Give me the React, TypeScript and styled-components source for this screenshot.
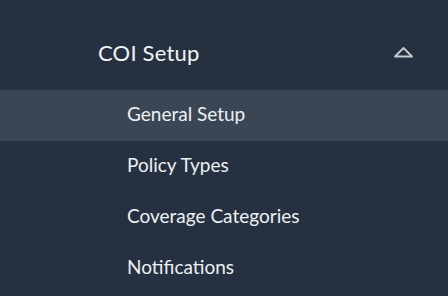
import React from "react";
import styled, { createGlobalStyle } from "styled-components";

const Global = createGlobalStyle`
  html, body { margin: 0; padding: 0; background: #253140; }
  body { width: 448px; height: 296px; overflow: hidden; font-family: Lato, "Noto Sans", sans-serif; }
`;

const Panel = styled.nav`
  width: 448px;
  height: 296px;
  background: #253140;
  display: flex;
  flex-direction: column;
`;

const Header = styled.div`
  height: 90px;
  box-sizing: border-box;
  padding: 14px 34px 0 98px;
  display: flex;
  align-items: center;
  justify-content: space-between;
  color: #f2f3f5;
`;

const Title = styled.span`
  font-size: 22px;
  letter-spacing: 0.2px;
`;

const Item = styled.div<{ $active?: boolean }>`
  height: 51px;
  box-sizing: border-box;
  padding: 0 0 4px 127px;
  flex: none;
  display: flex;
  align-items: center;
  font-size: 19px;
  color: #eef0f2;
  background: ${(p) => (p.$active ? "#3a4654" : "transparent")};
`;

const items = ["General Setup", "Policy Types", "Coverage Categories", "Notifications"];

export default function App() {
  return (
    <>
      <Global />
      <Panel>
        <Header>
          <Title>COI Setup</Title>
          <svg width="21" height="12" viewBox="0 0 21 12">
            <path d="M2 10.5 L10.5 2 L19 10.5 Z" fill="none" stroke="#c9cdd2" strokeWidth="1.8" strokeLinejoin="round" />
          </svg>
        </Header>
        {items.map((t, i) => (
          <Item key={t} $active={i === 0}>{t}</Item>
        ))}
      </Panel>
    </>
  );
}
